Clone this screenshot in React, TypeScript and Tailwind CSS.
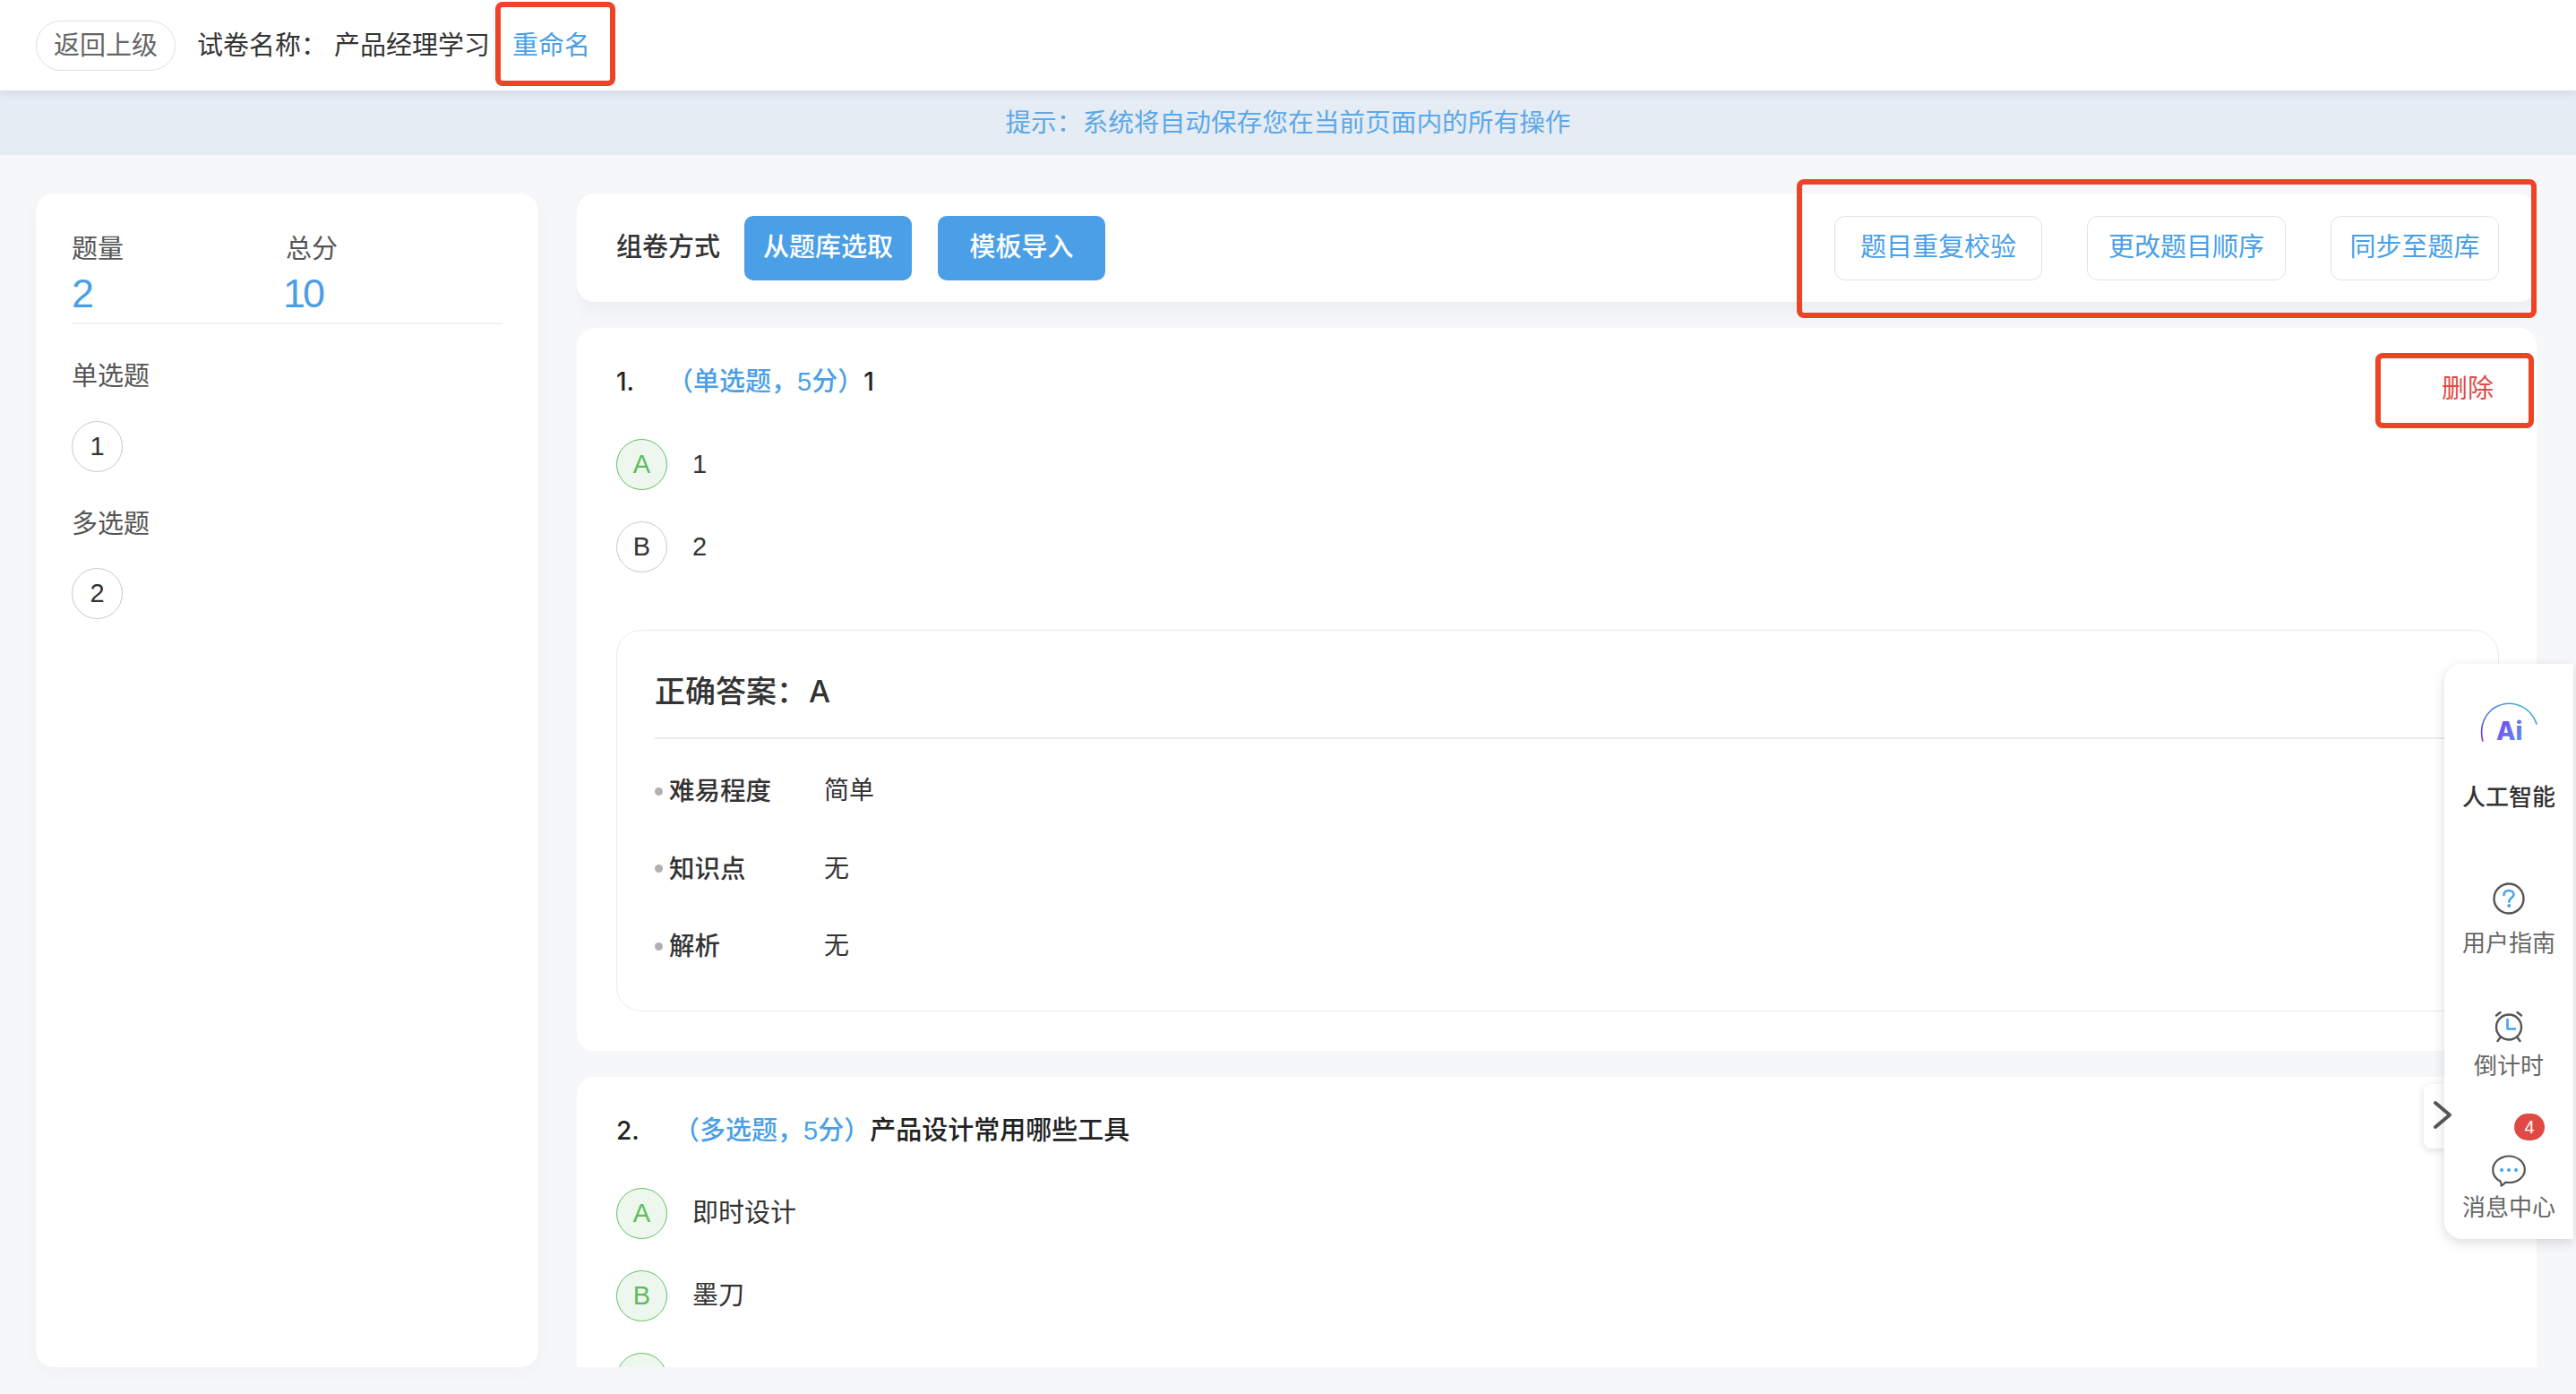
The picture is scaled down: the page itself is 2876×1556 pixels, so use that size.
import React from "react";

const FONT = "font-['Liberation_Sans','Noto_Sans_CJK_SC',sans-serif]";
const COLON = "\uFF1A";
const COMMA = "\uFF0C";
const LP = "\uFF08";
const RP = "\uFF09";

function Circle({ label, green }: { label: string; green?: boolean }) {
  return (
    <div
      className={
        green
          ? "flex h-[57px] w-[57px] shrink-0 items-center justify-center rounded-full border border-[#62c162] bg-[#eef7ee] text-[29px] text-[#5cbd5c]"
          : "flex h-[57px] w-[57px] shrink-0 items-center justify-center rounded-full border border-[#c9c9c9] bg-white text-[29px] text-[#333333]"
      }
    >
      {label}
    </div>
  );
}

function Option({ label, text, green }: { label: string; text: string; green?: boolean }) {
  return (
    <div className="flex h-[57px] items-center gap-[28px]">
      <Circle label={label} green={green} />
      <span className="text-[29px] text-[#333333]">{text}</span>
    </div>
  );
}

function MetaRow({ label, value }: { label: string; value: string }) {
  return (
    <div className="flex h-[40px] items-center">
      <span className="h-[9px] w-[9px] rounded-full bg-[#b0b0b0]" />
      <span className="ml-[7px] w-[173px] text-[28.5px] font-medium leading-[42px] text-[#333333]">{label}</span>
      <span className="text-[28px] leading-[42px] text-[#333333]">{value}</span>
    </div>
  );
}

function OutlineBtn({ text, w }: { text: string; w: string }) {
  return (
    <button className={`flex h-[72px] items-center justify-center rounded-[12px] border border-[#e2e2e8] bg-white text-[29px] text-[#4a9fe6] ${w}`}>
      {text}
    </button>
  );
}

function AiLogo() {
  return (
    <svg width="66" height="46" viewBox="0 0 66 46" fill="none">
      <defs>
        <linearGradient id="arcG" x1="0" y1="1" x2="1" y2="0">
          <stop offset="0" stopColor="#6a2cf0" />
          <stop offset="0.5" stopColor="#4a7fe6" />
          <stop offset="1" stopColor="#45c4d0" />
        </linearGradient>
        <linearGradient id="txtG" x1="0" y1="0" x2="1" y2="1">
          <stop offset="0" stopColor="#7a3df2" />
          <stop offset="1" stopColor="#5a9bf0" />
        </linearGradient>
      </defs>
      <path d="M3.8 44 C0.5 30 4 18 14 9 C30 -3 55 1 64 25" stroke="url(#arcG)" strokeWidth="1.6" strokeLinecap="round" />
      <text x="19" y="43" fontFamily="Inter, sans-serif" fontSize="28" fontWeight="800" fill="url(#txtG)">Ai</text>
    </svg>
  );
}

function HelpIcon() {
  return (
    <svg width="36" height="36" viewBox="0 0 36 36" fill="none">
      <circle cx="18" cy="18" r="16.5" stroke="#555555" strokeWidth="2.4" />
      <path d="M12.5 14 C12.5 10.8 15 9 18 9 C21 9 23.5 10.8 23.5 13.6 C23.5 17 18.2 17.2 18.2 21.6" stroke="#45a4ea" strokeWidth="2.6" strokeLinecap="round" />
      <circle cx="18.2" cy="26" r="1.9" fill="#45a4ea" />
    </svg>
  );
}

function ClockIcon() {
  return (
    <svg width="36" height="36" viewBox="0 0 36 36" fill="none">
      <circle cx="18" cy="18.5" r="14" stroke="#555555" strokeWidth="2.4" />
      <path d="M4 5.5 L8.5 2" stroke="#555555" strokeWidth="2.4" strokeLinecap="round" />
      <path d="M32 5.5 L27.5 2" stroke="#555555" strokeWidth="2.4" strokeLinecap="round" />
      <path d="M8.5 30 L5.5 34" stroke="#555555" strokeWidth="2.4" strokeLinecap="round" />
      <path d="M27.5 30 L30.5 34" stroke="#555555" strokeWidth="2.4" strokeLinecap="round" />
      <path d="M16.5 10 V20.5 H25" stroke="#45a4ea" strokeWidth="2.6" strokeLinecap="round" strokeLinejoin="round" />
    </svg>
  );
}

function ChatIcon() {
  return (
    <svg width="38" height="36" viewBox="0 0 38 36" fill="none">
      <path
        d="M10.5 34.5 C10.8 32 10.5 30.5 9 29.2 C4.2 26.6 1.2 22.2 1.2 17 C1.2 8.4 9.2 1.5 19 1.5 C28.8 1.5 36.8 8.4 36.8 16.5 C36.8 24.6 28.8 31 19 31 C17.6 31 16.4 30.9 15.2 30.7 C14 32.4 12.4 33.8 10.5 34.5 Z"
        stroke="#555555"
        strokeWidth="2.2"
        strokeLinejoin="round"
      />
      <circle cx="11" cy="17" r="2" fill="#45a4ea" />
      <circle cx="19" cy="17" r="2" fill="#45a4ea" />
      <circle cx="27" cy="17" r="2" fill="#45a4ea" />
    </svg>
  );
}

export default function App() {
  return (
    <div className={`relative flex h-[1556px] w-[2876px] flex-col overflow-hidden bg-[#f6f7f8] ${FONT}`}>
      <header className="relative z-10 flex h-[101px] shrink-0 items-center bg-white pl-[40px] shadow-[0_2px_10px_rgba(40,60,90,0.12)]">
        <button className="flex h-[56px] w-[156px] items-center justify-center rounded-full border border-[#dedee2] bg-white pt-[2px] text-[29px] text-[#666666]">
          返回上级
        </button>
        <span className="ml-[24px] pt-[2px] text-[29px] text-[#333333]">{"试卷名称" + COLON}</span>
        <span className="ml-[8px] pt-[2px] text-[29px] text-[#333333]">产品经理学习</span>
        <span className="ml-[25px] pt-[2px] text-[29px] text-[#4a9fe6]">重命名</span>
      </header>

      <div className="flex h-[72px] shrink-0 items-center justify-center bg-[#e5ecf4] pt-[2px] text-[28.7px] text-[#5ca8e8]">
        {"提示" + COLON + "系统将自动保存您在当前页面内的所有操作"}
      </div>

      <div className="flex h-[1353px] shrink-0 gap-[43px] pl-[40px] pt-[43px]">
        <aside className="flex w-[561px] shrink-0 flex-col rounded-[20px] bg-white px-[40px] pt-[42px] shadow-[0_6px_20px_rgba(30,70,140,0.03)]">
          <div className="flex border-b-2 border-[#f2f3f5] pb-[6px] pr-[6px]">
            <div className="flex w-[239px] flex-col">
              <span className="h-[40px] text-[29px] leading-[40px] text-[#555555]">题量</span>
              <span className="h-[56px] text-[45px] leading-[60px] text-[#4a9fe6]">2</span>
            </div>
            <div className="flex flex-col">
              <span className="h-[40px] text-[29px] leading-[40px] text-[#555555]">总分</span>
              <span className="-ml-[3px] h-[56px] text-[45px] leading-[60px] tracking-[-3px] text-[#4a9fe6]">10</span>
            </div>
          </div>
          <span className="mt-[38px] h-[40px] text-[29px] leading-[40px] text-[#555555]">单选题</span>
          <div className="mt-[30px]"><Circle label="1" /></div>
          <span className="mt-[38px] h-[40px] text-[29px] leading-[40px] text-[#555555]">多选题</span>
          <div className="mt-[29px]"><Circle label="2" /></div>
        </aside>

        <main className="flex w-[2188px] shrink-0 flex-col gap-[29px] overflow-hidden">
          <div className="flex h-[121px] shrink-0 items-center rounded-[20px] bg-white pl-[44px] pr-[42px] shadow-[0_8px_24px_rgba(30,70,140,0.06)]">
            <span className="text-[29px] font-medium text-[#333333]">组卷方式</span>
            <button className="ml-[27px] flex h-[72px] w-[187px] items-center justify-center rounded-[10px] bg-[#4a9fe6] text-[29px] font-medium text-white">
              从题库选取
            </button>
            <button className="ml-[29px] flex h-[72px] w-[187px] items-center justify-center rounded-[10px] bg-[#4a9fe6] text-[29px] font-medium text-white">
              模板导入
            </button>
            <div className="ml-auto flex gap-[50px]">
              <OutlineBtn text="题目重复校验" w="w-[232px]" />
              <OutlineBtn text="更改题目顺序" w="w-[222px]" />
              <OutlineBtn text="同步至题库" w="w-[188px]" />
            </div>
          </div>

          <section className="flex shrink-0 flex-col rounded-[20px] bg-white pb-[44px] pl-[44px] pr-[42px] pt-[40px]">
            <div className="flex h-[40px] items-center text-[29px] leading-[40px]">
              <span className="w-[24px] font-['Inter',sans-serif] text-[28px] font-medium text-[#222222]">1.</span>
              <span className="ml-[33px] font-medium text-[#4a9fe6]">{LP + "单选题" + COMMA + "5分" + RP}</span>
              <span className="font-['Inter',sans-serif] text-[28px] font-medium text-[#222222]">1</span>
              <span className="ml-auto mr-[6px] mt-[16px] text-[#e04a45]">删除</span>
            </div>
            <div className="mt-[44px] flex flex-col gap-[35px]">
              <Option label="A" text="1" green />
              <Option label="B" text="2" />
            </div>
            <div className="mt-[64px] flex flex-col rounded-[28px] border border-[#ebebeb] px-[42px] pb-[52px] pt-[44px]">
              <div className="flex h-[77px] items-start border-b-2 border-[#eaeaea] text-[34px] font-medium leading-[48px] text-[#333333]">
                <span>{"正确答案" + COLON}</span>
                <span className="ml-[2px] font-['Inter',sans-serif]">A</span>
              </div>
              <div className="mt-[38px] flex flex-col gap-[46.5px]">
                <MetaRow label="难易程度" value="简单" />
                <MetaRow label="知识点" value="无" />
                <MetaRow label="解析" value="无" />
              </div>
            </div>
          </section>

          <section className="flex h-[700px] shrink-0 flex-col rounded-t-[20px] bg-white pl-[44px] pr-[42px] pt-[40px]">
            <div className="flex h-[40px] items-center text-[29px] leading-[40px]">
              <span className="w-[24px] font-['Inter',sans-serif] text-[28px] font-medium text-[#222222]">2.</span>
              <span className="ml-[40px] font-medium text-[#4a9fe6]">{LP + "多选题" + COMMA + "5分" + RP}</span>
              <span className="font-medium text-[#222222]">产品设计常用哪些工具</span>
            </div>
            <div className="mt-[44px] flex flex-col gap-[35px]">
              <Option label="A" text="即时设计" green />
              <Option label="B" text="墨刀" green />
              <Option label="C" text="" green />
            </div>
          </section>
        </main>
      </div>

      {/* floating side panel */}
      <div className="absolute left-[2729px] top-[741px] z-20 flex h-[642px] w-[144px] flex-col items-center rounded-l-[20px] bg-white text-[26px] text-[#666666] shadow-[0_4px_14px_rgba(0,0,0,0.14)]">
        <div className="mt-[42px] flex h-[46px] items-center justify-center"><AiLogo /></div>
        <span className="mt-[43px] h-[36px] font-medium leading-[36px] text-[#333333]">人工智能</span>
        <div className="mt-[77px] flex h-[36px] items-center justify-center"><HelpIcon /></div>
        <span className="mt-[14px] h-[36px] leading-[36px]">用户指南</span>
        <div className="mt-[57px] flex h-[36px] items-center justify-center"><ClockIcon /></div>
        <span className="mt-[8px] h-[36px] leading-[36px]">倒计时</span>
        <div className="mt-[81px] flex h-[36px] items-center justify-center"><ChatIcon /></div>
        <span className="mt-[5px] h-[36px] leading-[36px]">消息中心</span>
        <span className="absolute left-[78px] top-[502px] flex h-[30px] w-[34px] items-center justify-center rounded-[15px] bg-[#e04a45] text-[20px] text-white">4</span>
      </div>

      {/* collapse handle */}
      <div className="absolute left-[2706px] top-[1210px] z-10 h-[72px] w-[23px] rounded-l-[8px] bg-white shadow-[0_2px_8px_rgba(0,0,0,0.14)]" />
      <svg className="absolute left-[2716px] top-[1228px] z-30" width="22" height="34" viewBox="0 0 22 34" fill="none">
        <path d="M3 3 L19 16.5 L3 30" stroke="#555555" strokeWidth="4" strokeLinecap="round" strokeLinejoin="round" />
      </svg>

      {/* annotation frames */}
      <div className="absolute left-[553px] top-[2px] z-40 h-[94px] w-[134px] rounded-[8px] border-[6px] border-[#ee4326]" />
      <div className="absolute left-[2006px] top-[200px] z-40 h-[155px] w-[826px] rounded-[8px] border-[6px] border-[#ee4326]" />
      <div className="absolute left-[2652px] top-[394px] z-40 h-[84px] w-[177px] rounded-[8px] border-[6px] border-[#ee4326]" />
    </div>
  );
}
